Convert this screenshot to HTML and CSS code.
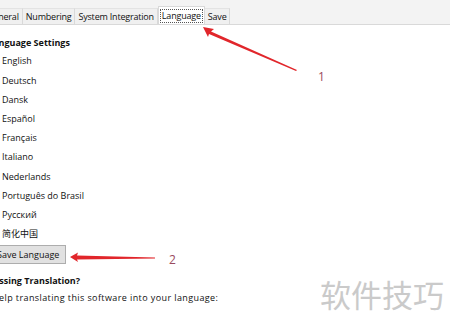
FILE: index.html
```html
<!DOCTYPE html>
<html lang="en">

<head>
    <meta charset="UTF-8">
    <title>Language</title>
    <link rel="stylesheet" href="styles.css">
</head>

<body>
    <div class="window">
        <!-- 选项卡 -->
        <div class="tabbar">
            <div class="tabs">
                <span class="tab">General</span>
                <span class="tab">Numbering</span>
                <span class="tab">System Integration</span>
                <span class="tab active"><span class="focus">Language</span></span>
                <span class="tab">Save</span>
            </div>
        </div>

        <div class="content">
            <h3 class="section-title">Language Settings</h3>
            <ul class="lang-list">
                <li>English</li>
                <li>Deutsch</li>
                <li>Dansk</li>
                <li>Español</li>
                <li>Français</li>
                <li>Italiano</li>
                <li>Nederlands</li>
                <li>Português do Brasil</li>
                <li>Русский</li>
                <li>简化中国</li>
            </ul>
            <button class="save-btn">Save Language</button>
            <h3 class="section-title missing">Missing Translation?</h3>
            <p class="help">Help translating this software into your language:</p>
        </div>

        <!-- 标注箭头 -->
        <svg class="marks" width="450" height="328" viewBox="0 0 450 328">
            <polygon points="203,27 214,29 211,31.5 297,70 296,71 209,34 208,37" fill="#e1262b" />
            <polygon points="70,257 78,252.5 77,255.5 155,257.5 155,258.5 77,259.5 78,262" fill="#e1262b" />
        </svg>
        <span class="num num-1">1</span>
        <span class="num num-2">2</span>
        <span class="watermark">软件技巧</span>
    </div>
</body>

</html>
```

FILE: styles.css
```css
* {
    padding: 0;
    margin: 0;
    box-sizing: border-box;
}

body {
    width: 450px;
    height: 328px;
    overflow: hidden;
    background: #fff;
    font-family: "Open Sans", "Noto Sans CJK SC", sans-serif;
    font-size: 9px;
    color: #111;
}

.window {
    position: relative;
    width: 450px;
    height: 328px;
    overflow: hidden;
}

.tabbar {
    height: 25px;
    padding-top: 8px;
    background: #f3f3f3;
    border-bottom: 1px solid #d9d9d9;
}

.tabs {
    display: flex;
    height: 16px;
    margin-left: -16px;
    letter-spacing: -0.2px;
}

.tab {
    display: flex;
    align-items: center;
    padding: 0 3px;
    background: #f0f0f0;
    border-right: 1px solid #d9d9d9;
    border-top: 1px solid #e3e3e3;
}

.tab.active {
    background: #fff;
    margin-top: -2px;
    height: 18px;
    padding: 0 1px;
    border: 1px solid #d9d9d9;
    border-bottom: none;
}

.tab.active .focus {
    padding: 0 1px;
    border: 1px dotted #555;
    line-height: 12px;
}

.content {
    margin-left: -12px;
    padding-top: 11px;
}

.section-title {
    font-size: 9px;
    font-weight: bold;
    line-height: 14px;
}

.lang-list {
    list-style: none;
    margin-top: 1.4px;
    padding-left: 14px;
}

.lang-list li {
    height: 19.2px;
    line-height: 19.2px;
}

.save-btn {
    display: block;
    margin-top: 2px;
    height: 19px;
    padding: 0 6px 0 8px;
    font-family: inherit;
    font-size: 9px;
    color: #111;
    background: #e1e1e1;
    border: 1px solid #adadad;
}

.missing {
    margin-top: 10px;
}

.help {
    margin-top: 3px;
    margin-left: 4px;
    line-height: 14px;
    letter-spacing: 0.4px;
}

.marks {
    position: absolute;
    left: 0;
    top: 0;
}

.num {
    position: absolute;
    font-size: 12px;
    line-height: 14px;
    color: #9a4a5e;
}

.num-1 {
    left: 318px;
    top: 70px;
}

.num-2 {
    left: 169px;
    top: 253px;
}

.watermark {
    position: absolute;
    left: 320px;
    top: 276px;
    font-family: "Noto Sans CJK SC", sans-serif;
    font-size: 31px;
    line-height: 36px;
    color: #cacaca;
}
```
